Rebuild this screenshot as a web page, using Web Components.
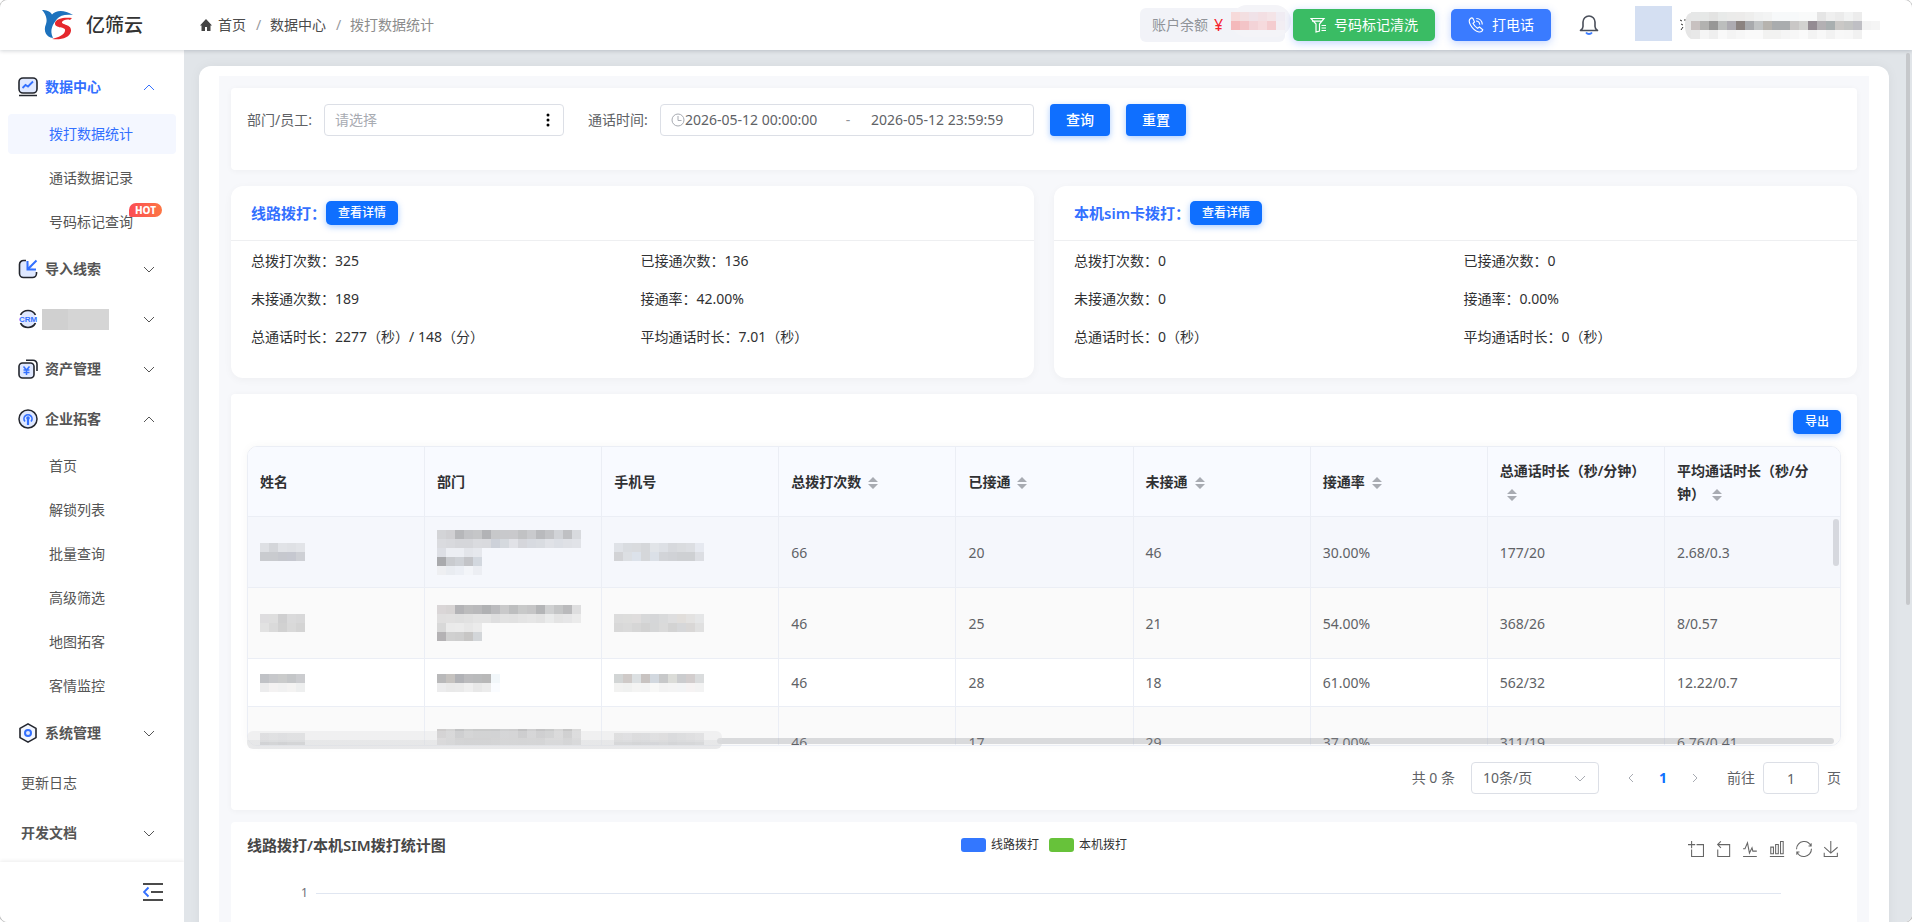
<!DOCTYPE html>
<html lang="zh-CN">
<head>
<meta charset="utf-8">
<title>亿筛云</title>
<style>
  html, body {
    margin: 0;
    background: #fff;
  }
  body {
    font: 14px/22px "Noto Sans", "Noto Sans CJK SC", sans-serif;
    text-spacing-trim: space-all;
    color: #606266;
  }
</style>
</head>
<body>
<app-shell>
  <app-header slot="header"></app-header>
  <side-menu slot="aside">
    <nav-group icon="chart" label="数据中心" open active>
      <nav-item active>拨打数据统计</nav-item>
      <nav-item>通话数据记录</nav-item>
      <nav-item badge="HOT">号码标记查询</nav-item>
    </nav-group>
    <nav-group icon="inbox" label="导入线索"></nav-group>
    <nav-group icon="crm"></nav-group>
    <nav-group icon="asset" label="资产管理"></nav-group>
    <nav-group icon="signal" label="企业拓客" open>
      <nav-item>首页</nav-item>
      <nav-item>解锁列表</nav-item>
      <nav-item>批量查询</nav-item>
      <nav-item>高级筛选</nav-item>
      <nav-item>地图拓客</nav-item>
      <nav-item>客情监控</nav-item>
    </nav-group>
    <nav-group icon="system" label="系统管理"></nav-group>
    <nav-group label="更新日志" plain></nav-group>
    <nav-group label="开发文档"></nav-group>
  </side-menu>
  <filter-bar></filter-bar>
  <stat-row>
    <stat-card heading="线路拨打：">
      <span>总拨打次数：325</span><span>已接通次数：136</span>
      <span>未接通次数：189</span><span>接通率：42.00%</span>
      <span>总通话时长：2277（秒）/ 148（分）</span><span>平均通话时长：7.01（秒）</span>
    </stat-card>
    <stat-card heading="本机sim卡拨打：">
      <span>总拨打次数：0</span><span>已接通次数：0</span>
      <span>未接通次数：0</span><span>接通率：0.00%</span>
      <span>总通话时长：0（秒）</span><span>平均通话时长：0（秒）</span>
    </stat-card>
  </stat-row>
  <call-table>
    <page-nav></page-nav>
  </call-table>
  <chart-panel heading="线路拨打/本机SIM拨打统计图"></chart-panel>
</app-shell>

<script>
const ICONS = {
  chart: `<rect x="1" y="1" width="18" height="15" rx="4" fill="#dfe8ff" stroke="#23262e" stroke-width="1.6"/>
    <path d="M4.5 11l3-3 2.500 1.500 5-5" fill="none" stroke="#3370ff" stroke-width="1.800"/>
    <path d="M1 18.500h18" stroke="#23262e" stroke-width="1.500"/>`,
  inbox: `<path d="M8 1.500H5.500a4 4 0 0 0-4 4v9a4 4 0 0 0 4 4h9a4 4 0 0 0 4-4V13" fill="#dfe8ff" stroke="#23262e" stroke-width="1.600"/>
    <path d="M18.500 1.500L10 10M9.500 2v8.500H18" fill="none" stroke="#3370ff" stroke-width="2"/>`,
  crm: `<path d="M2.500 6a8.500 8.500 0 0 1 15 0M2.500 14a8.500 8.500 0 0 0 15 0" fill="#dfe8ff" stroke="#23262e" stroke-width="1.600"/>
    <rect x="3" y="6" width="14" height="8" fill="#dfe8ff"/>
    <text x="10" y="13" text-anchor="middle" font-family="Liberation Sans, sans-serif" font-weight="700" font-size="8" fill="#3370ff">CRM</text>`,
  asset: `<path d="M8 1.200h7a4 4 0 0 1 4 4V12" fill="none" stroke="#23262e" stroke-width="1.600"/>
    <rect x="1" y="4" width="15" height="15" rx="3.500" fill="#dfe8ff" stroke="#23262e" stroke-width="1.600"/>
    <path d="M5.500 7.500l3 3.500 3-3.500M8.500 11v5M5.500 11h6M5.500 13.500h6" fill="none" stroke="#3370ff" stroke-width="1.500"/>`,
  signal: `<circle cx="10" cy="10" r="9" fill="#dfe8ff" stroke="#23262e" stroke-width="1.500"/>
    <path d="M7 12.500a4 4 0 1 1 6 0" fill="none" stroke="#3370ff" stroke-width="1.700"/>
    <path d="M10 9v7" stroke="#3370ff" stroke-width="2.200"/><circle cx="10" cy="9" r="1.800" fill="#3370ff"/>`,
  system: `<path d="M10 .9l8 4.500v9.200l-8 4.500-8-4.500V5.400z" fill="#f2f6ff" stroke="#23262e" stroke-width="1.600" stroke-linejoin="round"/>
    <circle cx="10" cy="10" r="3" fill="#dfe8ff" stroke="#3370ff" stroke-width="2"/>`
};

// every component clones its own template into an open shadow root
class BaseElement extends HTMLElement {
  constructor() {
    super();
    this.attachShadow({ mode: 'open' });
  }

  connectedCallback() {
    const template = document.createElement('template');
    template.innerHTML = this.render();
    this.shadowRoot.replaceChildren(template.content.cloneNode(true));
  }
}

class AppShell extends BaseElement {
  render() {
    return `
      <style>
        :host {
          display: flex;
          flex-direction: column;
          height: 100vh;
          border-radius: 8px;
          overflow: hidden;
          box-shadow: 0 0 0 1px #c4c4c4;
        }
        .shell__body {
          flex: 1;
          min-height: 0;
          display: flex;
        }
        main {
          flex: 1;
          min-width: 0;
          padding: 16px 23px 0 15px;
          background: #e1e5e9;
          overflow: hidden;
          position: relative;
        }
        .shell__page {
          background: #fff;
          border-radius: 12px 12px 0 0;
          padding: 10px 20px 0;
          box-shadow: 0 0 12px rgba(0,0,0,0.05);
        }
        .shell__content {
          display: flex;
          flex-direction: column;
          background: #f7f8fb;
          padding: 12px;
        }
        .shell__thumb {
          position: absolute;
          top: 3px;
          right: 2px;
          width: 4px;
          height: 552px;
          border-radius: 2px;
          background: #c6c8cb;
        }
      </style>
      <slot name="header"></slot>
      <div class="shell__body">
        <slot name="aside"></slot>
        <main>
          <div class="shell__page"><div class="shell__content"><slot></slot></div></div>
          <div class="shell__thumb"></div>
        </main>
      </div>
    `;
  }
}

// mosaic block: rows of hex colours separated by "/", "-" leaves a cell empty
class PixelMask extends BaseElement {
  render() {
    const rows = this.getAttribute('rows').split('/').map(r => r.trim().split(' '));
    const width = Math.max(...rows.map(r => r.length)) * 9;
    const cells = rows.map((row, y) => row.map((c, x) =>
      c === '-' ? '' : `<rect x="${x * 9}" y="${y * 9}" width="9" height="9" fill="#${c}"/>`).join('')).join('');
    return `
      <style>
        :host { display: block; }
        svg { display: block; }
      </style>
      <svg width="${width}" height="${rows.length * 9}" shape-rendering="crispEdges">${cells}</svg>
    `;
  }
}

class AppHeader extends BaseElement {
  render() {
    return `
      <style>
        :host {
          display: flex;
          align-items: center;
          height: 50px;
          background: #fff;
          box-shadow: 0 1px 4px rgba(0,21,41,0.18);
          position: relative;
          z-index: 2;
        }
        svg { display: block; flex: none; }
        .brand {
          display: flex;
          align-items: center;
          gap: 12px;
          width: 158px;
          padding-left: 41px;
          font-size: 19px;
          font-weight: 500;
          color: #333;
        }
        nav {
          display: flex;
          align-items: center;
          gap: 10px;
          flex: 1;
        }
        nav a {
          display: flex;
          align-items: center;
          gap: 5px;
          color: #4b4b4b;
          text-decoration: none;
        }
        nav i { color: #97999d; font-style: normal; width: 4px; text-align: center; }
        nav span { color: #8c8c8c; }
        .balance {
          display: flex;
          align-items: center;
          width: 133px;
          height: 34px;
          padding-left: 12px;
          border-radius: 6px;
          background: #f2f3f8;
          color: #909399;
          white-space: nowrap;
        }
        .balance b { color: #f5222d; font-size: 16px; font-weight: 400; margin: 0 4px 0 6px; }
        .balance__blob {
          display: flex;
          flex: none;
          align-items: center;
          width: 60px;
          height: 32px;
          border-radius: 16px;
          background: #f4f4f8;
          margin: -8px 0 0 4px;
        }
        button {
          display: flex;
          align-items: center;
          justify-content: center;
          gap: 8px;
          height: 32px;
          border: 0;
          border-radius: 5px;
          padding: 0;
          font: inherit;
          color: #fff;
          box-shadow: 0 2px 8px rgba(51,112,255,0.3);
        }
        .clean { width: 142px; background: #3abc64; margin-left: 8px; }
        .call { width: 100px; background: #3a7bff; margin-left: 16px; }
        .bell { width: 20px; margin-left: 28px; background: none; box-shadow: none; }
        .avatar { width: 37px; height: 35px; background: #d4dff2; margin: 0 8px 4px 36px; }
        .user {
          display: flex;
          width: 232px;
        }
      </style>
      <div class="brand">
        <svg width="33" height="32" viewBox="0 0 33 32">
          <path d="M1 1c4 .2 8 1 10 4.500 4-4.500 12-5 21 .5-7-1-13 0-16 4-4 5-8 11-4 19C5 28 2 22 5 15 7 10 4 4 1 1z" fill="#1d72bd"/>
          <path d="M31 9c-7-1-16 0-17 5-1 6 12 3 10 8-1 4-6 6-13 8 9 1 18-1 19-8 1-7-10-6-9-9 1-2 5-3 8-2z" fill="#e5282d"/>
        </svg>
        亿筛云
      </div>
      <nav>
        <a href="#"><svg width="14" height="14" viewBox="0 0 14 14"><path d="M7 1L1 7.500h1.500V13H6V9h2v4h3.500V7.500H13z" fill="#444"/></svg>首页</a>
        <i>/</i>
        <a href="#">数据中心</a>
        <i>/</i>
        <span>拨打数据统计</span>
      </nav>
      <div class="balance">账户余额<b>¥</b>
        <div class="balance__blob"><pixel-mask rows="f6dada f3dfe1 f0e2e8 f3dfe3 f4e4e7 f0ecf3/f4b9bb f3c4c7 f3d3d7 f6dadd f4cccf f2eef3"></pixel-mask></div>
      </div>
      <button class="clean" type="button">
        <svg width="16" height="16" viewBox="0 0 16 16" fill="none" stroke="#fff" stroke-width="1.200"><path d="M1 1.500h13L9.500 7v7L6 15V7zM2 4.200h10M11.500 8.500H16M11.500 11H16M11.500 13.500H16"/></svg>
        号码标记清洗
      </button>
      <button class="call" type="button">
        <svg width="16" height="16" viewBox="0 0 16 16" fill="none" stroke="#fff" stroke-width="1.100"><path d="M2.500 1.500C.5 3 .8 5 2.500 8c2 3.500 5 6.500 8.500 7 2 .2 3.500-1 3.800-2.300L11.500 10l-2 1.300C7.500 10 6 8.300 5 6.300L6.500 5 5 1.500C4.200.7 3.300.8 2.500 1.500zM8 4c2 0 3.500 1.500 3.800 3.700M8.300 1.500c3.300 0 5.700 2.300 6 6"/></svg>
        打电话
      </button>
      <button class="bell" type="button" aria-label="消息">
        <svg width="20" height="22" viewBox="0 0 20 22" fill="none"><path d="M1.500 16.500c1.500-1 2.500-2 2.500-4V8a6 6 0 0 1 12 0v4.500c0 2 1 3 2.500 4z" stroke="#4a4f5a" stroke-width="1.600" stroke-linejoin="round"/><path d="M7 18.500c1.500 2 4.500 2 6 0" stroke="#3a7bff" stroke-width="1.800"/></svg>
      </button>
      <div class="avatar"></div>
      <div class="user">
        <svg width="11" height="27" viewBox="0 0 11 27"><path d="M0 8l2 1M1 12l2 1M1 18l2-3M4 8h3" stroke="#333"/><path d="M11 1C6 2 5 8 5 14s2 11 6 13z" fill="#e6e6e6"/></svg>
        <pixel-mask rows="e6e7e7 e6e8e7 e3e3e2 e8eae9 ebebea ecebea eeeeed f1f2f2 f3f4f4 f7f9fa f7f9fa f7f9fa f9fafa f9fafa e5e5e5 efefef ebebeb f2f3f3 ececec/c8c1c0 b2b2b0 979796 bcbebd adabb1 8b8380 a8aaad c0c3c4 b6b3ae a9acae a9acae c9c7c6 d2d2d0 948c93 b3b0b3 a9afb0 cac8c6 c4c5c4 bfbfc4 f3f3f3 f5f5f5/e8e8e8 f5f5f5 efefef f9f9f9 f4f4f4 f7f7f7 fafafa fafafa f2f2f1 f2f2f1 f5f5f5 f7f7f7 fafafa f3f3f3 f8f8f8 f2f2f2 f8f8f8 f7f7f7 f1f1f1"></pixel-mask>
      </div>
    `;
  }
}

class SideMenu extends BaseElement {
  render() {
    return `
      <style>
        :host {
          display: flex;
          flex-direction: column;
          flex: none;
          width: 184px;
          background: #fff;
        }
        nav {
          flex: 1;
          min-height: 0;
          padding-top: 12px;
          overflow: hidden;
        }
        footer {
          display: flex;
          justify-content: flex-end;
          align-items: center;
          height: 60px;
          padding-right: 21px;
          box-shadow: 0 -1px 4px rgba(0,0,0,0.08);
        }
        button { border: 0; padding: 0; background: none; }
        svg { display: block; }
      </style>
      <nav><slot></slot></nav>
      <footer>
        <button type="button" aria-label="收起菜单">
          <svg width="20" height="18" viewBox="0 0 20 18" fill="none"><path d="M0 1h20M8 9h12M0 17h20" stroke="#111" stroke-width="1.700"/><path d="M5.500 4.500L1 9l4.500 4.500" stroke="#3370ff" stroke-width="1.900"/></svg>
        </button>
      </footer>
    `;
  }
}

class NavGroup extends BaseElement {
  render() {
    const icon = this.getAttribute('icon');
    const label = this.getAttribute('label');
    const open = this.hasAttribute('open');
    const plain = this.hasAttribute('plain');
    return `
      <style>
        :host { display: block; color: #555; }
        :host([active]) { color: #3370ff; }
        .group__title {
          display: flex;
          align-items: center;
          gap: 7px;
          box-sizing: border-box;
          width: 100%;
          height: 50px;
          padding: 0 29px 0 ${icon ? 18 : 21}px;
          border: 0;
          background: none;
          font: inherit;
          font-weight: ${plain ? 400 : 600};
          color: inherit;
          text-align: left;
        }
        .group__label { flex: 1; }
        .group__hidden { width: 67px; height: 21px; background: linear-gradient(90deg, #d0d0d0 26px, #d5d5d5 26px); margin-left: -3px; margin-right: auto; }
        .group__items {
          display: flex;
          flex-direction: column;
          gap: 4px;
          padding: 2px 8px;
        }
        svg { display: block; flex: none; }
      </style>
      <button class="group__title" type="button">
        ${icon ? `<svg width="20" height="20" viewBox="0 0 20 20">${ICONS[icon]}</svg>` : ''}
        ${label ? `<span class="group__label">${label}</span>` : '<span class="group__hidden"></span>'}
        ${plain ? '' : `<svg width="12" height="12" viewBox="0 0 12 12" fill="none" stroke="currentColor"><path d="${open ? 'M1 9l5-5 5 5' : 'M1 4l5 5 5-5'}"/></svg>`}
      </button>
      ${open ? '<div class="group__items"><slot></slot></div>' : ''}
    `;
  }
}

class NavItem extends BaseElement {
  render() {
    const badge = this.getAttribute('badge');
    return `
      <style>
        :host { display: block; position: relative; color: #555; }
        :host([active]) { color: #3370ff; }
        :host([active]) a { background: #f4f7ff; }
        a {
          display: block;
          padding-left: 41px;
          line-height: 40px;
          border-radius: 4px;
          color: inherit;
          text-decoration: none;
        }
        .badge {
          position: absolute;
          top: 1px;
          left: 121px;
          width: 33px;
          border-radius: 7px 7px 7px 2px;
          background: linear-gradient(90deg, #fb4d55, #fd7644);
          color: #fff;
          font: 800 10px/14px "Noto Sans", sans-serif;
          text-align: center;
        }
      </style>
      <a href="#"><slot></slot></a>
      ${badge ? `<span class="badge">${badge}</span>` : ''}
    `;
  }
}

class PrimaryButton extends BaseElement {
  render() {
    return `
      <style>
        :host { display: block; flex: none; }
        button {
          display: block;
          width: 100%;
          height: 32px;
          border: 0;
          border-radius: 4px;
          padding: 0 16px;
          background: #0f6fff;
          color: #fff;
          font: inherit;
          font-weight: 500;
          box-shadow: 0 2px 6px rgba(15,111,255,0.35);
        }
        :host([small]) button {
          height: 24px;
          border-radius: 5px;
          padding: 0 12px;
          font-size: 12px;
        }
      </style>
      <button type="button"><slot></slot></button>
    `;
  }
}

class FilterBar extends BaseElement {
  render() {
    return `
      <style>
        :host {
          display: block;
          margin-bottom: 16px;
          padding: 16px 16px 34px;
          border-radius: 4px;
          background: #fff;
          box-shadow: 0 1px 6px rgba(0,0,0,0.04);
        }
        form { display: flex; align-items: center; gap: 16px; }
        .field { display: flex; align-items: center; gap: 12px; margin-right: 8px; }
        .field:nth-child(2) { margin-right: 0; }
        label { min-width: 60px; }
        label.wide { min-width: 65px; }
        .box {
          display: flex;
          align-items: center;
          box-sizing: border-box;
          height: 32px;
          border: 1px solid #dcdfe6;
          border-radius: 4px;
          padding: 0 10px;
        }
        .box--person { width: 240px; }
        .box--time { width: 374px; }
        input {
          border: 0;
          padding: 0;
          width: 140px;
          font: inherit;
          color: inherit;
          background: none;
          outline: 0;
        }
        input::placeholder { color: #a8abb2; }
        .box--person input { flex: 1; }
        .dash { width: 46px; text-align: center; color: #909399; }
        svg { display: block; flex: none; }
      </style>
      <form>
        <div class="field">
          <label class="wide" for="person">部门/员工:</label>
          <div class="box box--person">
            <input id="person" placeholder="请选择">
            <svg width="10" height="14" viewBox="0 0 10 14"><circle cx="5" cy="2" r="1.500"/><circle cx="5" cy="7" r="1.500"/><circle cx="5" cy="12" r="1.500"/></svg>
          </div>
        </div>
        <div class="field">
          <label for="start">通话时间:</label>
          <div class="box box--time">
            <svg width="14" height="14" viewBox="0 0 14 14" fill="none" stroke="#a8abb2"><circle cx="7" cy="7" r="6"/><path d="M7 3v4.500h3.500"/></svg>
            <input id="start" value="2026-05-12 00:00:00">
            <span class="dash">-</span>
            <input aria-label="结束时间" value="2026-05-12 23:59:59">
          </div>
        </div>
        <primary-button>查询</primary-button>
        <primary-button>重置</primary-button>
      </form>
    `;
  }
}

class StatRow extends BaseElement {
  render() {
    return `
      <style>
        :host { display: grid; grid-template-columns: 1fr 1fr; gap: 20px; margin-bottom: 16px; }
      </style>
      <slot></slot>
    `;
  }
}

class StatCard extends BaseElement {
  render() {
    return `
      <style>
        :host {
          display: block;
          border-radius: 12px;
          background: #fff;
          box-shadow: 0 2px 8px rgba(0,0,0,0.04);
          color: #303133;
        }
        header {
          display: flex;
          align-items: center;
          height: 54px;
          padding: 0 20px;
          border-bottom: 1px solid #eeeff1;
        }
        h3 { margin: 0; font-size: 15px; font-weight: 600; color: #3370ff; }
        .card__grid {
          display: grid;
          grid-template-columns: 1fr 1fr;
          line-height: 38px;
          padding: 1px 4px 22px 20px;
        }
      </style>
      <header><h3>${this.getAttribute('heading')}</h3><primary-button small>查看详情</primary-button></header>
      <div class="card__grid"><slot></slot></div>
    `;
  }
}

const COLUMNS = [
  ['姓名'], ['部门'], ['手机号'], ['总拨打次数', 1], ['已接通', 1], ['未接通', 1], ['接通率', 1],
  ['总通话时长（秒/分钟）', 1], ['平均通话时长（秒/分钟）', 1]
];

const ROWS = [
  {
    masks: [
      'dee0e4 d4d6da e1e3e7 dfe1e5 e2e4e8/c9cbcf c9cbcf c6c8ce c6c8d0 ced0d5',
      'd3d4d7 d0d0d3 b6b7ba c2c3c6 c5c6c8 b2b3b6 c7c8ca c8c9cc c9c9cc c1c2c4 c9cacd b9babd c2c3c6 d1d3d7 bfc0c3 d8dade/dadbdf d8d9dd d5d6da d5d6da dadbdf d9dade cdd1d9 d5d9de e1e2e7 d5d6db d7dae0 d9dce1 e0e2e7 dcdfe5 dfe1e6 e1e3e8/dddfe5 eceef3 eceef3 e3e5ea e6e8ed/a9aaad c9cbcf ced1d6 c3c4c8 d3d8df/eeeff2 e9ecf1 eceff5 f3f5f9 eceef3',
      'dfe2e7 d9dce0 d9dbde d5d7da e1e4e8 dde0e5 d7d9dd dadcdf dcdee2 e6e9f0/d2d3d6 dcdfe3 dce2ea d5d7da dbe0e7 d2d4d8 d0d2d6 ced0d3 ced0d3 dcdee3'
    ],
    values: ['66', '20', '46', '30.00%', '177/20', '2.68/0.3']
  },
  {
    masks: [
      'dedddf dedede cfcfd0 dadadb d8d8d9/e2e2e2 dadada d1d1d1 d9d9d9 d4d4d4',
      'dad6d7 d7d4d4 b3b3b6 bcbcbd b9b9bb b0b1b3 bbbbbe c9c9ca bdbebf c8c9c9 c5c5c6 b4b5b7 cfd0d1 c4c5c6 bababc dededf/e0dfdf e1e0e0 dfdfdf e1e1e1 e4e4e4 e4e4e4 dededf e2e2e2 e1e1e1 e4e4e4 e6e6e6 e3e3e3 eaebeb e4e4e4 e6e6e7 ebebeb/d8d8d8 eaeaea ebebeb e7e7e7 ebebeb/b4b2b4 d0d0d0 cecece c7c6c5 d3d6d9',
      'dcdcdc dddddc dfdddd d7d8d9 d5d6d8 d9dadb dededf e1dedb e3e2e1 e5e6e7/d8d8d8 dadada d6d6d6 d2d2d2 d5d6d7 dadada d3d3d3 d6d7d9 d9d7d6 e0e0e0'
    ],
    values: ['46', '25', '21', '54.00%', '368/26', '8/0.57']
  },
  {
    masks: [
      'c0c2c6 c7c8cb cacbcb c4c6c8 cbcccf/ececed f4f2f2 f1f1f1 f4f3f2 eeefef',
      'b9b9ba c5c2bf b1b2b6 bbbbbd b9babb b8b8b8 f2f7fa/ececed e9e9e9 eaeaea efefef e8e8e8 ececec fafcff',
      'd2d5d5 cfcac8 dce0e2 c8c3c1 d2d8df c7c8c9 dbdcd8 cbccce d2cdcd dadcdd/f2f2f1 f0f1f0 f4f4f3 f3f3f3 f8f8f7 f3f3f3 f4f4f4 f3f4f5 f6f3f3 f3f3f3'
    ],
    values: ['46', '28', '18', '61.00%', '562/32', '12.22/0.7']
  },
  {
    masks: [
      'dddddf e0e1e2 dddee0 e0e1e2 e0e1e2/c5c6c9 cbcccd c4c5c7 cbcccd cbcccd',
      'cdcbcb d3d3d3 c2c3c4 cdcece c9caca c9caca c8c9ca cecfd0 cdcdce c1c1c2 cfcfd0 c4c4c5 c9caca d6d6d6 c6c6c6 dadada/d8d6d6 d2d2d2 cacaca c8c8c8 c8c8c8 c8c8c8 cacaca cecece cdcdcd cccccc cdcdcd cccccc d5d5d5 d5d5d5 cdcdcd d6d6d6/dedede e3e3e3 e3e3e3 e3e3e3 e3e3e3',
      'dddddd dfdfe1 d9d9da d9dadc dfdfe0 dddcdc d6d7d9 dadbdc dededf e2e2e3/d2d2d3 d1d2d3 cccdce cfd0d2 cecfd4 d3d4d5 cbccce d0d1d3 d0d1d2 d5d6d7'
    ],
    values: ['46', '17', '29', '37.00%', '311/19', '6.76/0.41']
  }
];

class CallTable extends BaseElement {
  render() {
    const caret = '<span class="caret"><svg width="10" height="12" viewBox="0 0 10 12" fill="#a8abb2"><path d="M0 5l5-5 5 5zM0 7l5 5 5-5z"/></svg></span>';
    return `
      <style>
        :host {
          display: block;
          margin-bottom: 12px;
          padding: 16px;
          border-radius: 4px;
          background: #fff;
          box-shadow: 0 1px 6px rgba(0,0,0,0.04);
        }
        .toolbar { display: flex; justify-content: flex-end; margin-bottom: 12px; }
        .frame { position: relative; }
        .scroll {
          height: 298px;
          border: 1px solid #ebeef5;
          border-radius: 10px;
          overflow: hidden;
          box-shadow: 0 0 10px rgba(0,0,0,0.04);
        }
        table {
          width: 100%;
          table-layout: fixed;
          border-collapse: separate;
          border-spacing: 0;
        }
        th, td {
          box-sizing: border-box;
          padding: 0 12px;
          border-right: 1px solid #ebeef5;
          border-bottom: 1px solid #ebeef5;
          text-align: left;
          line-height: 23px;
        }
        th:last-child, td:last-child { border-right: 0; }
        th { height: 70px; background: #f8faff; color: #303133; font-weight: 600; }
        th:last-child { width: 11%; }
        td { height: 71px; background: #fff; }
        tr:nth-child(1) td { background: #f5f7fc; }
        tr:nth-child(even) td { background: #fafafa; }
        tr:nth-child(3) td { height: 48px; }
        .caret { display: inline-flex; width: 24px; justify-content: center; vertical-align: middle; }
        .bar { position: absolute; border-radius: 3px; background: rgba(144,147,153,0.3); }
        .bar--v { top: 73px; right: 2px; width: 6px; height: 47px; }
        .bar--h { left: 470px; right: 7px; bottom: 2px; height: 6px; }
        .smear {
          position: absolute;
          left: 0;
          bottom: -3px;
          width: 475px;
          height: 18px;
          border-radius: 6px;
          background: linear-gradient(rgba(225,225,227,0.4) 9px, rgba(218,219,221,0.6) 9px);
        }
      </style>
      <div class="toolbar"><primary-button small>导出</primary-button></div>
      <div class="frame">
        <div class="scroll">
          <table>
            <thead><tr>${COLUMNS.map(([name, sort]) => `<th>${name}${sort ? caret : ''}</th>`).join('')}</tr></thead>
            <tbody>${ROWS.map(row => `<tr>${
              row.masks.map(m => `<td><pixel-mask rows="${m}"></pixel-mask></td>`).join('')
            }${row.values.map(v => `<td>${v}</td>`).join('')}</tr>`).join('')}</tbody>
          </table>
        </div>
        <div class="bar bar--v"></div>
        <div class="bar bar--h"></div>
        <div class="smear"></div>
      </div>
      <slot></slot>
    `;
  }
}

class PageNav extends BaseElement {
  render() {
    return `
      <style>
        :host {
          display: flex;
          justify-content: flex-end;
          align-items: center;
          margin-top: 16px;
        }
        .select { display: grid; align-items: center; margin: 0 16px; }
        .select > * { grid-area: 1 / 1; }
        .select svg { justify-self: end; margin-right: 13px; pointer-events: none; }
        select, input {
          box-sizing: border-box;
          height: 32px;
          border: 1px solid #dcdfe6;
          border-radius: 4px;
          background: #fff;
          font: inherit;
          color: inherit;
        }
        select { appearance: none; width: 128px; padding: 0 11px; }
        input { width: 56px; text-align: center; margin: 0 8px; padding: 0; }
        button {
          display: flex;
          align-items: center;
          justify-content: center;
          width: 32px;
          height: 32px;
          border: 0;
          padding: 0;
          background: none;
          font: inherit;
        }
        button.current { color: #0f6fff; font-weight: 700; }
        label.jump { margin-left: 16px; }
        svg { display: block; }
      </style>
      <span>共 0 条</span>
      <div class="select">
        <select aria-label="每页条数"><option>10条/页</option></select>
        <svg width="12" height="12" viewBox="0 0 12 12" fill="none" stroke="#a8abb2"><path d="M1 4l5 5 5-5"/></svg>
      </div>
      <button type="button" aria-label="上一页"><svg width="12" height="12" viewBox="0 0 12 12" fill="none" stroke="#a8abb2"><path d="M8 2L4 6l4 4"/></svg></button>
      <button type="button" class="current">1</button>
      <button type="button" aria-label="下一页"><svg width="12" height="12" viewBox="0 0 12 12" fill="none" stroke="#a8abb2"><path d="M4 2l4 4-4 4"/></svg></button>
      <label class="jump" for="page">前往</label>
      <input id="page" value="1">
      <span>页</span>
    `;
  }
}

const TOOLS = [
  ['区域缩放', 'M0,13.5h26.9 M13.5,26.9V0 M32.1,13.5H58V58H13.5 V32.1'],
  ['还原缩放', 'M22,1.4L9.900,13.5l12.300,12.300 M10.300,13.500H54.900v44.600 H10.300v-26'],
  ['折线图', 'M4.100,28.900h7.100l9.300-22l7.400,38l9.700-19.700l3,12.800h14.900M4.100,58h51.400'],
  ['柱状图', 'M6.700,22.900h10V48h-10V22.900zM24.900,13h10v35h-10V13zM43.200,2h10v46h-10V2zM3.100,58h53.700'],
  ['还原', 'M47,18.900h9.800V8.700 M56.300,20.100 C52.100,9,40.500,0.600,26.800,2.100C12.600,3.700,1.600,16.200,2.100,30.600 M13,41.100H3.100v10.200 M3.700,39.900c4.200,11.100,15.800,19.500,29.500,18 c14.200-1.600,25.200-14.100,24.700-28.500'],
  ['保存为图片', 'M4.700,22.900L29.300,45.500L54.700,23.400M4.600,43.600L4.600,58L53.800,58L53.800,43.600M29.200,45.100L29.200,0']
];

class ChartPanel extends BaseElement {
  render() {
    return `
      <style>
        :host {
          display: block;
          padding: 11px 16px 300px;
          border-radius: 4px;
          background: #fff;
        }
        header { display: grid; grid-template-columns: 1fr auto 1fr; align-items: center; }
        h3 { margin: 0; font-size: 15px; font-weight: 600; color: #464646; }
        .legend { display: flex; gap: 10px; font-size: 12px; color: #333; }
        .legend span { display: flex; align-items: center; gap: 5px; }
        .legend i { width: 25px; height: 14px; border-radius: 3px; background: #3377ff; }
        .legend span + span i { background: #67c23a; }
        .tools { display: flex; justify-content: flex-end; gap: 11px; padding: 8px 2px 0 0; }
        .tools button { border: 0; padding: 0; background: none; }
        svg { display: block; overflow: visible; }
        .axis {
          display: flex;
          align-items: center;
          gap: 8px;
          margin-top: 25px;
          padding: 0 60px 0 54px;
          font-size: 12px;
          color: #6e7079;
        }
        .axis hr { flex: 1; margin: 0; border: 0; border-top: 1px solid #e0e6f1; }
      </style>
      <header>
        <h3>${this.getAttribute('heading')}</h3>
        <div class="legend"><span><i></i>线路拨打</span><span><i></i>本机拨打</span></div>
        <div class="tools">${TOOLS.map(([title, d]) => `<button type="button" aria-label="${title}">
          <svg width="16" height="16" viewBox="0 0 60 60" fill="none" stroke="#666" stroke-width="4"><path d="${d}"/></svg></button>`).join('')}</div>
      </header>
      <div class="axis">1<hr></div>
    `;
  }
}

customElements.define('pixel-mask', PixelMask);
customElements.define('primary-button', PrimaryButton);
customElements.define('app-shell', AppShell);
customElements.define('app-header', AppHeader);
customElements.define('side-menu', SideMenu);
customElements.define('nav-group', NavGroup);
customElements.define('nav-item', NavItem);
customElements.define('filter-bar', FilterBar);
customElements.define('stat-row', StatRow);
customElements.define('stat-card', StatCard);
customElements.define('call-table', CallTable);
customElements.define('page-nav', PageNav);
customElements.define('chart-panel', ChartPanel);
</script>
</body>
</html>
